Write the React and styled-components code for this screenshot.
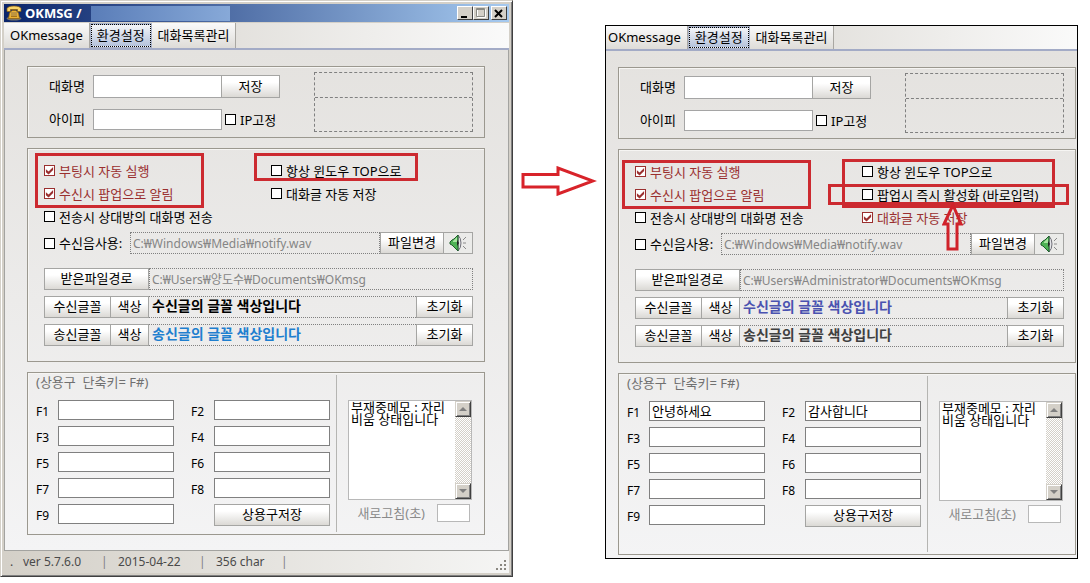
import React, { useId } from 'react'
import styled, { createGlobalStyle } from 'styled-components'

const leftOptions = [
    { text: '부팅시 자동 실행', checked: true },
    { text: '수신시 팝업으로 알림', checked: true },
    { text: '전송시 상대방의 대화명 전송' },
]

const beforeSettings = {
    rightOptions: [
        { text: '항상 윈도우 TOP으로' },
        { text: '대화글 자동 저장' },
    ],
    filePath: 'C:₩Users₩양도수₩Documents₩OKmsg',
    receiveColor: '#000000',
    sendColor: '#1f7fcf',
    phrases: {},
}

const afterSettings = {
    rightOptions: [
        { text: '항상 윈도우 TOP으로' },
        { text: '팝업시 즉시 활성화 (바로입력)' },
        { text: '대화글 자동 저장', checked: true },
    ],
    filePath: 'C:₩Users₩Administrator₩Documents₩OKmsg',
    receiveColor: '#4a52b0',
    sendColor: '#404040',
    phrases: { F1: '안녕하세요', F2: '감사합니다' },
}

const phraseKeys = ['F1', 'F2', 'F3', 'F4', 'F5', 'F6', 'F7', 'F8', 'F9']

const PhoneIcon = () => (
    <svg width="16" height="16" viewBox="0 0 16 16" aria-hidden="true">
        <ellipse cx="8" cy="13.500" rx="7.500" ry="2" fill="#77746a" />
        <path d="M2.500 13.500 L3.500 8 L6 5.500 H10 L12.500 8 L13.500 13.500 Z" fill="#e9b237" stroke="#8a5c0c" strokeWidth="0.7" />
        <path d="M1 6.500 V3.500 Q2 1 8 1 Q14 1 15 3.500 V6.500 H11.500 V4.500 H4.500 V6.500 Z" fill="#f8d468" stroke="#8a5c0c" strokeWidth="0.7" />
        <rect x="5" y="7" width="6" height="5" fill="#a87518" />
        <path d="M5.500 8h1M7.500 8h1M9.500 8h1M5.500 10h1M7.500 10h1M9.500 10h1" stroke="#fff2b8" strokeWidth="1" />
    </svg>
)

const SpeakerIcon = () => (
    <svg width="18" height="18" viewBox="0 0 18 18" aria-hidden="true">
        <path d="M9 1 Q12 4 12 9 Q12 14 9 17 Z" fill="#e6e6ea" stroke="#707078" strokeWidth="1" />
        <path d="M1 8 L3 6 L5 5 L9 1 V17 L5 13 L3 11 L1 10 Z" fill="#4fb356" stroke="#1d5c2b" strokeWidth="1" />
        <path d="M4 7 L8 3 V8 H4 Z" fill="#a8e6a0" />
        <path d="M8 6 L10 9 L8 12 Z" fill="#222" />
        <path d="M14 6 L17 3 M14 9 H17 M14 12 L17 15" stroke="#8a8a8a" strokeWidth="1" fill="none" />
    </svg>
)

const Check = ({ option, height = 23 }) => (
    <CheckLabel $on={option.checked} $height={height}>
        <CheckBox type="checkbox" defaultChecked={option.checked} />
        {option.text}
    </CheckLabel>
)

const TabBar = ({ cropped }) => (
    <Tabs $cropped={cropped}>
        <Tab type="button" $cropped={cropped}>OKmessage</Tab>
        <Tab type="button" $active>환경설정</Tab>
        <Tab type="button">대화목록관리</Tab>
    </Tabs>
)

const FontRow = ({ label, sample, color }) => (
    <FieldRow>
        <Button type="button" $width={67}>{label}</Button>
        <Button type="button" $width={39} $joined>색상</Button>
        <Sample $color={color}>{sample}</Sample>
        <Button type="button" $width={57}>초기화</Button>
    </FieldRow>
)

const Settings = ({ settings, cropped, children }) => {
    const id = useId()
    return (
        <Body $cropped={cropped}>
            <Profile>
                <ProfileForm>
                    <ProfileRow>
                        <label htmlFor={id + 'name'}>대화명</label>
                        <TextBox id={id + 'name'} $height={23} />
                        <Button type="button" $width={59} $joined>저장</Button>
                    </ProfileRow>
                    <ProfileRow>
                        <label htmlFor={id + 'ip'}>아이피</label>
                        <TextBox id={id + 'ip'} $height={21} />
                        <FixedIp>
                            <Check option={{ text: 'IP고정' }} height={20} />
                        </FixedIp>
                    </ProfileRow>
                </ProfileForm>
                <Notice>
                    <div />
                    <div />
                </Notice>
            </Profile>

            <Options>
                <OptionGrid>
                    <div>{leftOptions.map(o => <Check key={o.text} option={o} />)}</div>
                    <div>{settings.rightOptions.map(o => <Check key={o.text} option={o} />)}</div>
                </OptionGrid>
                <FieldRow>
                    <SoundLabel>
                        <Check option={{ text: '수신음사용:' }} height={22} />
                    </SoundLabel>
                    <PathBox readOnly aria-label="수신음" defaultValue="C:₩Windows₩Media₩notify.wav" />
                    <Button type="button" $width={64}>파일변경</Button>
                    <IconButton type="button" aria-label="재생"><SpeakerIcon /></IconButton>
                </FieldRow>
                <FileRow>
                    <Button type="button" $width={105}>받은파일경로</Button>
                    <PathBox readOnly aria-label="받은파일경로" defaultValue={settings.filePath} />
                </FileRow>
                <FontRow label="수신글꼴" sample="수신글의 글꼴 색상입니다" color={settings.receiveColor} />
                <FontRow label="송신글꼴" sample="송신글의 글꼴 색상입니다" color={settings.sendColor} />
                {children}
            </Options>

            <Phrases>
                <PhrasePane $tall={cropped}>
                    <Caption>(상용구&nbsp; 단축키= F#)</Caption>
                    <PhraseGrid>
                        {phraseKeys.map(key => (
                            <React.Fragment key={key}>
                                <label htmlFor={id + key}>{key}</label>
                                <PhraseInput id={id + key} defaultValue={settings.phrases[key]} />
                            </React.Fragment>
                        ))}
                        <SaveButton type="button">상용구저장</SaveButton>
                    </PhraseGrid>
                </PhrasePane>
                <MemoPane>
                    <Memo>
                        <textarea aria-label="부재중메모" defaultValue="부재중메모 : 자리비움 상태입니다" />
                        <ScrollBar>
                            <ScrollButton type="button" aria-label="위로">
                                <svg width="8" height="4" viewBox="0 0 8 4"><path d="M0 4 L4 0 L8 4 Z" fill="#808080" /></svg>
                            </ScrollButton>
                            <ScrollButton type="button" aria-label="아래로">
                                <svg width="8" height="4" viewBox="0 0 8 4"><path d="M0 0 H8 L4 4 Z" fill="#808080" /></svg>
                            </ScrollButton>
                        </ScrollBar>
                    </Memo>
                    <Refresh>
                        <label htmlFor={id + 'refresh'}>새로고침(초)</label>
                        <input id={id + 'refresh'} />
                    </Refresh>
                </MemoPane>
            </Phrases>
        </Body>
    )
}

const App = () => {
    return (
        <>
            <GlobalStyle />
            <Page>
                <Window>
                    <TitleBar>
                        <PhoneIcon />
                        <h1>OKMSG /</h1>
                        <UserName />
                        <WindowButton type="button" aria-label="최소화">
                            <svg width="10" height="10" viewBox="0 0 10 10"><path d="M1 8h6v2H1z" /></svg>
                        </WindowButton>
                        <WindowButton type="button" aria-label="최대화">
                            <svg width="10" height="10" viewBox="0 0 10 10">
                                <path d="M1.500 1.500h8v8h-8z" fill="none" stroke="#fff" />
                                <path d="M0.500 0.500h8v8h-8zM0.500 1.500h8" fill="none" stroke="#8a8a84" />
                            </svg>
                        </WindowButton>
                        <CloseButton type="button" aria-label="닫기">
                            <svg width="10" height="10" viewBox="0 0 10 10"><path d="M1 2l7 7M8 2l-7 7" stroke="#000" strokeWidth="2" /></svg>
                        </CloseButton>
                    </TitleBar>
                    <TabBar />
                    <Settings settings={beforeSettings}>
                        <Mark $x={7} $y={4} $w={169} $h={55} />
                        <Mark $x={226} $y={4} $w={164} $h={28} />
                    </Settings>
                    <StatusBar>
                        <StatusText $width={13}>.</StatusText>
                        <StatusText $width={78}>ver 5.7.6.0</StatusText>
                        <i>|</i>
                        <StatusText $width={81}>2015-04-22</StatusText>
                        <i>|</i>
                        <StatusText $width={65}>356 char</StatusText>
                        <i>|</i>
                        <svg width="11" height="11" viewBox="0 0 11 11" aria-hidden="true">
                            <path d="M8 0h2v2h-2zM8 4h2v2h-2zM4 4h2v2h-2zM8 8h2v2h-2zM4 8h2v2h-2zM0 8h2v2h-2z" fill="#8a8780" />
                        </svg>
                    </StatusBar>
                </Window>

                <Between>
                    <svg width="76" height="30" viewBox="0 0 76 30" aria-hidden="true">
                        <path d="M2 8.500 H37 V2 L72 15 L37 28 V21 H2 Z" fill="#fff" stroke="#d8232a" strokeWidth="3" />
                    </svg>
                </Between>

                <Capture>
                    <TabBar cropped />
                    <Settings settings={afterSettings} cropped>
                        <Mark $x={3} $y={10} $w={189} $h={49} />
                        <Mark $x={223} $y={9} $w={213} $h={49} />
                        <Mark $x={209} $y={34} $w={241} $h={21} />
                        <UpArrow width="22" height="52" viewBox="0 0 22 52" aria-hidden="true">
                            <path d="M11 4 L19 23 H15 V48 H6 V23 H2 Z" fill="none" stroke="#d0222a" strokeWidth="3" />
                        </UpArrow>
                    </Settings>
                </Capture>
            </Page>
        </>
    )
}

export default App


const GlobalStyle = createGlobalStyle`
    *{
        box-sizing: border-box;
    }
    body{
        margin: 0;
        background: #fff;
        color: #000;
    }
    body, input, button, textarea{
        font-family: "Noto Sans", "Noto Sans CJK KR", sans-serif;
        font-size: 13px;
        line-height: 16px;
    }
    input, textarea{
        min-width: 0;
        margin: 0;
        border-radius: 0;
        outline: none;
    }
`

const Page = styled.main`
    display: grid;
    grid-template-columns: 513fr 92fr 473fr;
    align-items: start;
    padding-right: 12px;
`

const Window = styled.section`
    padding: 3px;
    background: #d4d0c8;
    border: 1px solid;
    border-color: #d4d0c8 #404040 #404040 #d4d0c8;
    box-shadow: inset 1px 1px #fff, inset -1px -1px #808080;
`

const Capture = styled.section`
    margin-top: 25px;
    border: 1px solid #000;
`

const Between = styled.div`
    padding: 166px 0 0 8px;
`

const TitleBar = styled.header`
    display: flex;
    align-items: center;
    height: 18px;
    margin-bottom: 1px;
    padding: 0 2px;
    background: linear-gradient(to right, #0a246a, #a6caf0);

    h1{
        margin: 0 0 0 3px;
        width: 66px;
        font-size: 13px;
        color: #fff;
        white-space: nowrap;
    }
`

const UserName = styled.div`
    width: 139px;
    height: 15px;
    margin-right: auto;
    background: linear-gradient(to right, #5a7db8, #87a9d8);
`

const WindowButton = styled.button`
    display: flex;
    align-items: center;
    justify-content: center;
    width: 16px;
    height: 14px;
    padding: 0;
    background: #d4d0c8;
    border: 1px solid;
    border-color: #fff #404040 #404040 #fff;
`

const CloseButton = styled(WindowButton)`
    margin-left: 2px;
`

const Tabs = styled.nav`
    display: flex;
    height: ${p => (p.$cropped ? 25 : 27)}px;
    border-bottom: 2px solid #a3abc6;
    background: linear-gradient(to right, #e3e1dd 45%, #fafafa);
`

const Tab = styled.button`
    padding: 0 6px 2px;
    padding-left: ${p => (p.$cropped ? 2 : 6)}px;
    border: 0;
    border-right: 1px solid #a9a7a2;
    background: linear-gradient(#fafafa, #dedcd8);
    white-space: nowrap;

    ${p => p.$active && `
        margin: 1px;
        padding: 0 5px 2px;
        border: 1px dotted #000;
        outline: 1px solid #a9b2c8;
        background: linear-gradient(#f4f5f8, #b5c3dc);
    `}
`

const Body = styled.div`
    display: flex;
    flex-direction: column;
    gap: 10px;
    padding: ${p => (p.$cropped ? '16px 1px 3px 12px' : '16px 23px 15px 22px')};
    border: solid #a3a3a0;
    border-width: ${p => (p.$cropped ? '0' : '0 1px 1px')};
    background: linear-gradient(#e4e2df, #f4f4f5);
`

const Group = styled.section`
    border: 1px solid #9b988f;
    box-shadow: inset 1px 1px #f6f5f3;
`

const Profile = styled(Group)`
    display: grid;
    grid-template-columns: minmax(0, 265fr) minmax(0, 159fr);
    padding: 5px 11px 5px 21px;
`

const ProfileForm = styled.div`
    display: flex;
    flex-direction: column;
    gap: 11px;
    padding: 3px 34px 0 0;
`

const ProfileRow = styled.div`
    display: flex;
    align-items: center;

    > label{
        flex: 0 0 44px;
        padding-bottom: 2px;
    }
`

const TextBox = styled.input`
    flex: 1;
    height: ${p => p.$height}px;
    border: 1px solid #a5a5a5;
    background: #fff;
`

const FixedIp = styled.div`
    flex: 0 0 58px;
    padding-left: 3px;
`

const Notice = styled.div`
    display: grid;
    grid-template-rows: 24px 1fr;
    height: 60px;
    border: 1px dashed #808080;

    div + div{
        border-top: 1px dashed #808080;
    }
`

const Button = styled.button`
    flex: 0 0 ${p => p.$width}px;
    align-self: stretch;
    margin-left: ${p => (p.$joined ? -1 : 0)}px;
    padding: 0 0 2px;
    border: 1px solid #a5a5a3;
    background: linear-gradient(#fff 30%, #dbd9d5);
    color: #000;
    white-space: nowrap;
`

const IconButton = styled(Button)`
    flex-basis: 30px;
    display: flex;
    align-items: center;
    justify-content: center;
    margin-left: -1px;
    padding: 0;
    background: #ebebe9;
`

const Options = styled(Group)`
    position: relative;
    display: flex;
    flex-direction: column;
    gap: 6px;
    padding: 10px 11px 15px 16px;
`

const OptionGrid = styled.div`
    display: grid;
    grid-template-columns: 227fr 202fr;
    margin-bottom: -2px;
`

const CheckLabel = styled.label`
    display: flex;
    align-items: center;
    gap: 4px;
    height: ${p => p.$height}px;
    color: ${p => (p.$on ? '#9a2f2f' : '#000')};
    white-space: nowrap;
`

const CheckBox = styled.input`
    appearance: none;
    flex: 0 0 11px;
    height: 11px;
    border: 1px solid currentColor;
    background: #fff;
    color: inherit;

    &:checked::after{
        content: '';
        display: block;
        height: 9px;
        background: currentColor;
        clip-path: polygon(10% 35%, 40% 60%, 90% 10%, 90% 45%, 40% 95%, 10% 70%);
    }
`

const FieldRow = styled.div`
    display: flex;
    align-items: center;
    height: 22px;
`

const FileRow = styled(FieldRow)`
    margin-top: 8px;
`

const SoundLabel = styled.div`
    flex: 0 0 86px;
`

const PathBox = styled.input`
    flex: 1;
    height: 22px;
    padding: 0 2px;
    border: 1px dotted #808080;
    background: transparent;
    color: #858585;
    font-size: 12px;
`

const Sample = styled.output`
    flex: 1;
    height: 22px;
    padding-left: 3px;
    border: dotted #808080;
    border-width: 1px 0;
    color: ${p => p.$color};
    font-size: 14px;
    font-weight: bold;
    line-height: 18px;
    white-space: nowrap;
`

const Phrases = styled(Group)`
    display: grid;
    grid-template-columns: minmax(0, 308fr) minmax(0, 148fr);
`

const PhrasePane = styled.div`
    padding: 0 6px ${p => (p.$tall ? 27 : 8)}px 8px;
`

const Caption = styled.div`
    height: 27px;
    padding-top: 1px;
    color: #707070;
`

const PhraseGrid = styled.div`
    display: grid;
    grid-template-columns: 22px minmax(0, 1fr) 40px minmax(0, 1fr);
    row-gap: 6px;

    label{
        padding-top: 4px;
        font-size: 12px;
    }
    label:nth-of-type(even){
        padding-left: 17px;
    }
`

const PhraseInput = styled.input`
    width: 100%;
    height: 20px;
    padding: 0 2px 2px;
    border: 1px solid #808080;
    background: #fff;
`

const SaveButton = styled(Button)`
    grid-column: 4;
    height: 22px;
`

const MemoPane = styled.div`
    margin: 2px 0;
    padding: 25px 12px 0 11px;
    border-left: 1px solid #b5b5b2;
`

const Memo = styled.div`
    display: flex;
    height: 100px;
    border: 1px solid #b8b8b8;
    background: #fff;

    textarea{
        flex: 1;
        padding: 0 2px;
        border: 0;
        background: transparent;
        line-height: 12px;
        resize: none;
        overflow: hidden;
    }
`

const ScrollBar = styled.div`
    flex: 0 0 16px;
    display: flex;
    flex-direction: column;
    justify-content: space-between;
    background: repeating-conic-gradient(#d4d0c8 0 25%, #fff 0 50%) 0 0 / 2px 2px;
`

const ScrollButton = styled.button`
    display: flex;
    align-items: center;
    justify-content: center;
    height: 16px;
    padding: 0;
    background: #d4d0c8;
    border: 1px solid;
    border-color: #d4d0c8 #404040 #404040 #d4d0c8;
    box-shadow: inset 1px 1px #fff, inset -1px -1px #808080;
`

const Refresh = styled.div`
    display: flex;
    align-items: center;
    justify-content: flex-end;
    gap: 12px;
    margin-top: 4px;
    padding-right: 2px;
    color: #8a8a8a;
    white-space: nowrap;

    input{
        width: 33px;
        height: 18px;
        border: 1px solid #b8b8b8;
        background: #fff;
    }
`

const Mark = styled.div`
    position: absolute;
    left: ${p => p.$x}px;
    top: ${p => p.$y}px;
    width: ${p => p.$w}px;
    height: ${p => p.$h}px;
    border: 3px solid #cc2a30;
    pointer-events: none;
`

const UpArrow = styled.svg`
    position: absolute;
    left: 323px;
    top: 51px;
    pointer-events: none;
`

const StatusBar = styled.footer`
    display: flex;
    align-items: center;
    height: 22px;
    padding: 0 2px 0 6px;
    background: linear-gradient(to right, #d4d0c8, #f5f5f4);
    color: #4a4a4a;
    font-size: 12px;
    white-space: nowrap;

    i{
        width: 17px;
        font-style: normal;
        color: #808080;
    }
    svg{
        margin: 6px 0 0 auto;
    }
`

const StatusText = styled.span`
    width: ${p => p.$width}px;
`
